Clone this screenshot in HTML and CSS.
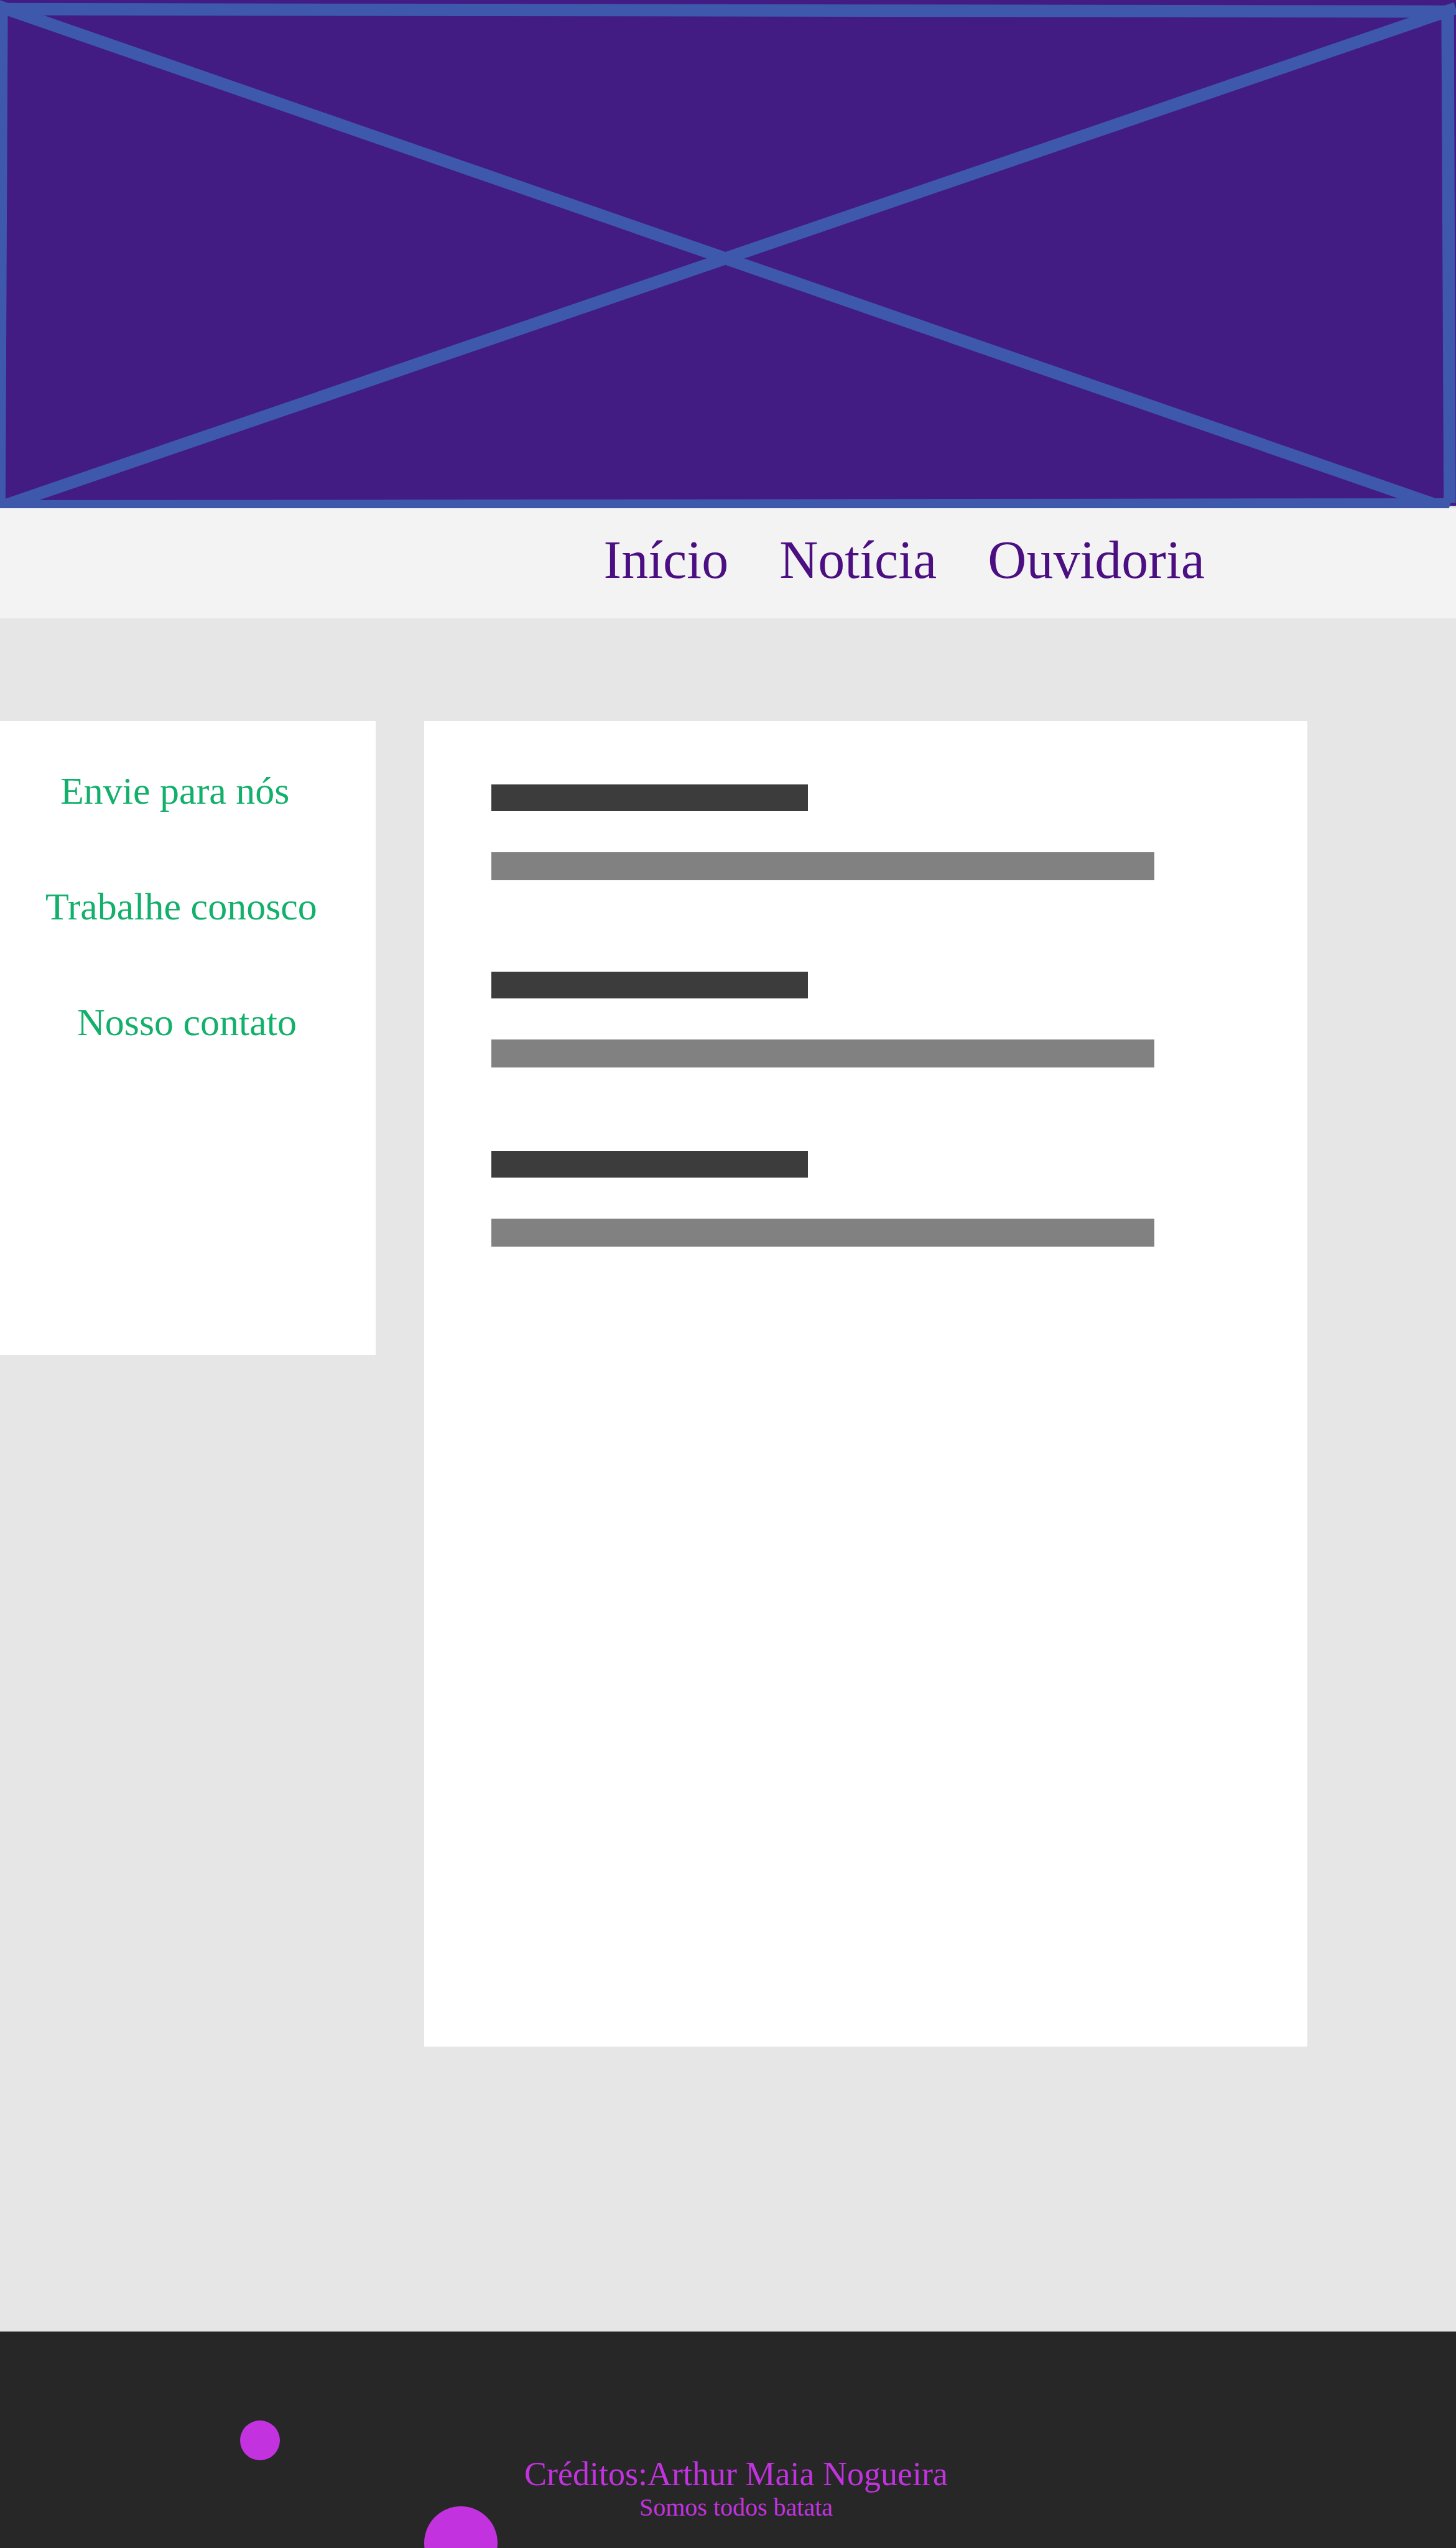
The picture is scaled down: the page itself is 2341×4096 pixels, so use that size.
FILE: index.html
```html
<!DOCTYPE html>
<html lang="pt-BR">
<head>
<meta charset="utf-8">
<meta name="viewport" content="width=device-width, initial-scale=1">
<title>Início</title>
<link rel="stylesheet" href="styles.css">
</head>
<body>
<header>
  <svg class="banner" viewBox="0 0 2480 866" preserveAspectRatio="none" aria-hidden="true">
    <rect class="banner-fill" width="2480" height="862"/>
    <g class="banner-lines">
      <path d="M-5 9.6 2467 867.7"/>
      <path d="M-5 865.7 2479.500 14"/>
      <path d="M0 15.600 2466 19.700"/>
    </g>
    <g class="banner-edges">
      <path d="M0 0 13.300 27 9.300 866 0 866Z"/>
      <path d="M2455 20H2476.500L2479.500 857H2459Z"/>
      <path d="M0 852.300 2471 849V857L2468 866H0Z"/>
    </g>
  </svg>
  <nav class="nav" aria-label="Principal">
    <a href="#inicio">Início</a>
    <a href="#noticia">Notícia</a>
    <a href="#ouvidoria">Ouvidoria</a>
  </nav>
</header>
<div class="layout">
  <aside class="sidebar">
    <a class="side-link side-link-send" href="#envie">Envie para nós</a>
    <a class="side-link side-link-jobs" href="#trabalhe">Trabalhe conosco</a>
    <a class="side-link side-link-contact" href="#contato">Nosso contato</a>
  </aside>
  <main class="content">
    <article class="post post-lead"><div class="post-title"></div><div class="post-text"></div></article>
    <article class="post"><div class="post-title"></div><div class="post-text"></div></article>
    <article class="post"><div class="post-title"></div><div class="post-text"></div></article>
  </main>
</div>
<footer class="footer">
  <span class="dot dot-small"></span>
  <span class="dot dot-large"></span>
  <p class="credits">Créditos:Arthur Maia Nogueira</p>
  <p class="motto">Somos todos batata</p>
</footer>
</body>
</html>
```
FILE: styles.css
```css
* {
  box-sizing: border-box;
}

body {
  margin: 0;
  background: #e6e6e6;
  font-family: "Liberation Serif", "Times New Roman", serif;
}

a {
  text-decoration: none;
}

.banner {
  display: block;
  width: 100%;
  aspect-ratio: 2341 / 817;
}

.banner-fill {
  fill: #421b83;
}

.banner-lines {
  fill: none;
  stroke: #3e59ac;
  stroke-width: 21;
}

.banner-edges {
  fill: #3e59ac;
}

.nav {
  display: flex;
  flex-wrap: wrap;
  align-items: center;
  justify-content: flex-end;
  gap: 0 82px;
  min-height: 177px;
  padding: 0 404px 12px 0;
  background: #f3f3f3;
  font-size: 86px;
  line-height: 100px;
}

.nav a {
  color: #4b0f82;
}

.layout {
  display: grid;
  grid-template-columns: 604fr 1420fr;
  align-items: start;
  column-gap: 78px;
  padding: 165px 239px 458px 0;
}

.sidebar {
  display: flex;
  flex-direction: column;
  align-items: flex-start;
  gap: 114px;
  min-height: 1019px;
  padding-top: 76px;
  background: #fff;
}

.side-link {
  color: #13b06b;
  font-size: 62px;
  line-height: 72px;
}

.side-link-send {
  margin-left: 97px;
}

.side-link-jobs {
  margin-left: 73px;
}

.side-link-contact {
  margin-left: 124px;
}

.content {
  min-height: 2131px;
  padding: 102px 246px 102px 108px;
  background: #fff;
}

.post {
  display: flex;
  flex-direction: column;
  gap: 66px;
  margin-bottom: 134px;
}

.post-lead {
  margin-bottom: 147px;
}

.post-title {
  width: 509px;
  max-width: 100%;
  height: 43px;
  background: #3c3c3c;
}

.post-text {
  height: 45px;
  background: #818181;
}

.footer {
  position: relative;
  overflow: hidden;
  padding: 199px 0 41px 26px;
  background: #272727;
  color: #c233df;
  text-align: center;
}

.credits,
.motto {
  margin: 0;
}

.credits {
  font-size: 54px;
  line-height: 60px;
}

.motto {
  font-size: 40px;
  line-height: 48px;
}

/* Decorative circles floating over the footer */
.dot {
  position: absolute;
  border-radius: 50%;
  background: #c233df;
}

.dot-small {
  top: 143px;
  left: 386px;
  width: 64px;
  height: 64px;
}

.dot-large {
  top: 281px;
  left: 682px;
  width: 118px;
  height: 118px;
}
```
